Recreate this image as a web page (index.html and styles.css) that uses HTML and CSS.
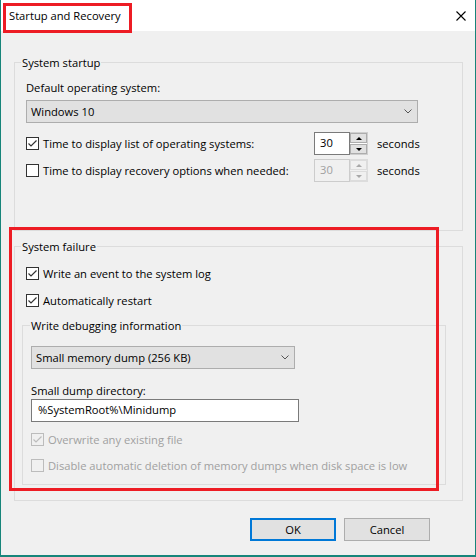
FILE: index.html
```html
<!DOCTYPE html>
<html>
<head>
<meta charset="utf-8">
<title>Startup and Recovery</title>
<link rel="stylesheet" href="styles.css">
</head>
<body>
<div class="window">
  <div class="titlebar">
    <span class="title">Startup and Recovery</span>
    <svg class="close" width="10" height="10" viewBox="0 0 10 10"><path d="M0.5 0.5L9.5 9.5M9.5 0.5L0.5 9.5" stroke="#000" stroke-width="1.1" fill="none"/></svg>
  </div>
  <div class="content">
    <fieldset class="group startup">
      <legend>System startup</legend>
      <div class="label">Default operating system:</div>
      <div class="select os-select">
        <span>Windows 10</span>
        <svg class="chev" width="8" height="5" viewBox="0 0 8 5"><path d="M0.5 0.5L4 4L7.5 0.5" stroke="#555" stroke-width="1" fill="none"/></svg>
      </div>
      <div class="spin-row first">
        <div class="check">
          <span class="box"><svg width="11" height="11" viewBox="0 0 11 11"><path d="M1.5 5.5L4 8L9.5 2.5" stroke="#333" stroke-width="1.2" fill="none"/></svg></span>
          <span>Time to display list of operating systems:</span>
        </div>
        <div class="spinner">
          <div class="spin-text">30</div>
          <div class="spin-btns">
            <span class="sb"><i class="up"></i></span>
            <span class="sb"><i class="down"></i></span>
          </div>
        </div>
        <span class="unit">seconds</span>
      </div>
      <div class="spin-row">
        <div class="check">
          <span class="box"></span>
          <span>Time to display recovery options when needed:</span>
        </div>
        <div class="spinner disabled">
          <div class="spin-text">30</div>
          <div class="spin-btns">
            <span class="sb"><i class="up"></i></span>
            <span class="sb"><i class="down"></i></span>
          </div>
        </div>
        <span class="unit">seconds</span>
      </div>
    </fieldset>

    <fieldset class="group failure">
      <legend>System failure</legend>
      <div class="check row first">
        <span class="box"><svg width="11" height="11" viewBox="0 0 11 11"><path d="M1.5 5.5L4 8L9.5 2.5" stroke="#333" stroke-width="1.2" fill="none"/></svg></span>
        <span>Write an event to the system log</span>
      </div>
      <div class="check row second">
        <span class="box"><svg width="11" height="11" viewBox="0 0 11 11"><path d="M1.5 5.5L4 8L9.5 2.5" stroke="#333" stroke-width="1.2" fill="none"/></svg></span>
        <span>Automatically restart</span>
      </div>
      <fieldset class="group debug">
        <legend>Write debugging information</legend>
        <div class="select dump-select">
          <span>Small memory dump (256 KB)</span>
          <svg class="chev" width="8" height="5" viewBox="0 0 8 5"><path d="M0.5 0.5L4 4L7.5 0.5" stroke="#555" stroke-width="1" fill="none"/></svg>
        </div>
        <div class="label dir-label">Small dump directory:</div>
        <div class="textbox">%SystemRoot%\Minidump</div>
        <div class="check row disabled overwrite">
          <span class="box"><svg width="11" height="11" viewBox="0 0 11 11"><path d="M1.5 5.5L4 8L9.5 2.5" stroke="#bcbcbc" stroke-width="1.2" fill="none"/></svg></span>
          <span>Overwrite any existing file</span>
        </div>
        <div class="check row disabled disable-del">
          <span class="box"></span>
          <span>Disable automatic deletion of memory dumps when disk space is low</span>
        </div>
      </fieldset>
    </fieldset>

    <div class="buttons">
      <button class="btn default">OK</button>
      <button class="btn">Cancel</button>
    </div>
  </div>

  <div class="annot annot-title"></div>
  <div class="annot annot-failure"></div>
</div>
</body>
</html>
```

FILE: styles.css
```css
* { box-sizing: border-box; }
html, body { margin: 0; padding: 0; }
body {
  width: 476px;
  height: 557px;
  overflow: hidden;
  font-family: "Open Sans", "Noto Sans", sans-serif;
  font-size: 11.2px;
  color: #000;
  background: #f0f0f0;
}
.window {
  position: relative;
  width: 476px;
  height: 557px;
  border-left: 1px solid #17857a;
  border-right: 1px solid #17857a;
  border-bottom: 2px solid #17857a;
  background: #f0f0f0;
}
.titlebar {
  height: 31px;
  background: #fff;
  display: flex;
  align-items: center;
  justify-content: space-between;
  padding: 0 9px 0 8px;
}
.title { font-size: 11.2px; line-height: 16px; padding-top: 1px; }
.close { display: block; }

.content {
  padding: 24px 0 0 13px;
}

fieldset.group {
  margin: 0;
  border: 1px solid #dcdcdc;
  min-width: 0;
}
fieldset.group > legend {
  padding: 0 1px;
  line-height: 15px;
  height: 15px;
}

fieldset.startup {
  width: 449px;
  padding: 10px 11px 48px 11px;
}
fieldset.startup > legend { margin-left: -5px; }

.label { line-height: 16px; height: 16px; }

.select {
  display: flex;
  align-items: center;
  justify-content: space-between;
  height: 23px;
  background: #e1e1e1;
  border: 1px solid #adadad;
  padding: 0 5px 0 4px;
  line-height: 16px;
}
.os-select { width: 392px; margin-top: 4px; }

.spin-row {
  display: flex;
  align-items: center;
  height: 23px;
  margin-top: 4px;
}
.spin-row.first { margin-top: 9px; }
.spin-row .check { width: 288px; }

.check {
  display: flex;
  align-items: center;
  line-height: 16px;
}
.box {
  width: 13px;
  height: 13px;
  border: 1px solid #333;
  background: #fff;
  margin-right: 4px;
  flex: none;
}
.box svg { display: block; }

.spinner {
  display: flex;
  width: 54px;
  height: 23px;
}
.spin-text {
  width: 36px;
  height: 23px;
  border: 1px solid #7a7a7a;
  background: #fff;
  padding-left: 5px;
  line-height: 20px;
}
.spin-btns {
  width: 18px;
  height: 23px;
  border: 1px solid #cfcfcf;
  border-left: none;
  background: #fff;
  padding: 0 1px 0 0;
  display: flex;
  flex-direction: column;
  justify-content: center;
  gap: 1px;
}
.sb {
  display: flex;
  align-items: center;
  justify-content: center;
  width: 17px;
  height: 10px;
  background: #e1e1e1;
  border: 1px solid #adadad;
}
.sb i { display: block; width: 0; height: 0; border-left: 3px solid transparent; border-right: 3px solid transparent; }
.sb i.up { border-bottom: 3px solid #000; }
.sb i.down { border-top: 3px solid #000; }

.spinner.disabled .spin-text { border-color: #cccccc; background: #f0f0f0; color: #a0a0a0; }
.spinner.disabled .spin-btns { border-color: #dcdcdc; background: #f0f0f0; }
.spinner.disabled .sb { background: #f0f0f0; border-color: #dcdcdc; }
.spinner.disabled .sb i.up { border-bottom-color: #a8a8a8; }
.spinner.disabled .sb i.down { border-top-color: #a8a8a8; }

.unit { margin-left: 9px; }

fieldset.failure {
  width: 449px;
  margin-top: 8px;
  padding: 11px 12px 15px 7px;
}
fieldset.failure > legend { margin-left: -1px; }
.row { height: 17px; }
.failure > .row { padding-left: 4px; }
.failure > .row.second { margin-top: 10px; }

fieldset.debug {
  width: 424px;
  margin-top: 9px;
  padding: 13px 8px 10px 8px;
}
fieldset.debug > legend { margin-left: -1px; }
.dump-select { width: 264px; padding-left: 4px; }
.dir-label { margin-top: 14px; }
.textbox {
  width: 268px;
  height: 23px;
  border: 1px solid #7a7a7a;
  background: #fff;
  padding-left: 6px;
  line-height: 20px;
}
.overwrite { margin-top: 9px; }
.disable-del { margin-top: 9px; }
.check.disabled { color: #a0a0a0; }
.check.disabled .box { border-color: #bcbcbc; background: #f0f0f0; }

.buttons {
  display: flex;
  justify-content: flex-end;
  gap: 8px;
  margin-top: 17px;
  padding-right: 45px;
}
.btn {
  width: 86px;
  height: 23px;
  margin: 0;
  padding: 0;
  background: #e1e1e1;
  border: 1px solid #adadad;
  font-family: inherit;
  font-size: 11.2px;
  color: #000;
}
.btn.default { border: 2px solid #0078d7; }

.annot {
  position: absolute;
  border: 3px solid #ed1c24;
  pointer-events: none;
}
.annot-title { left: 2px; top: 3px; width: 129px; height: 30px; }
.annot-failure { left: 8px; top: 227px; width: 430px; height: 264px; }
```
